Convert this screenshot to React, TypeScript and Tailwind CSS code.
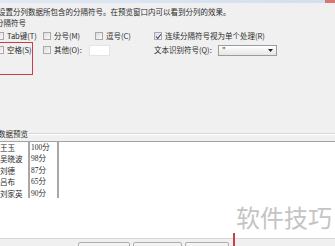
import React from "react"

const cjk = { fontFamily: '"Noto Sans CJK SC", "Noto Sans", sans-serif' }

function Box({ checked = false }: { checked?: boolean }) {
  return (
    <span className="relative flex h-[8px] w-[8px] shrink-0 items-center justify-center border border-[#a9a9a9] bg-gradient-to-br from-[#dcdcdc] to-[#fbfbfb]">
      {checked && (
        <svg width="7" height="7" viewBox="0 0 8 8" className="absolute">
          <path d="M1.2 4.2 L3.2 6.2 L6.8 1.4" fill="none" stroke="#3b4f7a" strokeWidth="1.3" />
        </svg>
      )}
    </span>
  )
}

function Check({ label, checked }: { label: string; checked?: boolean }) {
  return (
    <span className="flex items-center gap-[3px]">
      <Box checked={checked} />
      <span>{label}</span>
    </span>
  )
}

const names = ["王玉", "吴晓波", "刘德", "吕布", "刘家英"]
const scores = ["100分", "98分", "87分", "65分", "90分"]

export default function App() {
  return (
    <div
      className="relative h-[246px] w-[335px] overflow-hidden bg-[#f0f0f0] text-[7.5px] text-[#2b2b2b]"
      style={cjk}
    >
      {/* window title edge */}
      <div className="flex h-[3px]">
        <div className="flex-1 bg-gradient-to-r from-[#dfe8f4] to-[#d3dfef]" />
        <div className="w-[10px] bg-[#d9776e]" />
      </div>

      <div className="ml-[-4px]">
        <p className="mt-[4px] leading-[10px] ml-[2px]">
          设置分列数据所包含的分隔符号。在预览窗口内可以看到分列的效果。
        </p>
        <p className="mt-[1px] leading-[10px]">分隔符号</p>

        <div className="mt-[2px] flex h-[12px] items-center">
          <div className="w-[47px]">
            <Check label="Tab键(T)" />
          </div>
          <div className="w-[52px]">
            <Check label="分号(M)" />
          </div>
          <div className="w-[59px]">
            <Check label="逗号(C)" />
          </div>
          <Check label="连续分隔符号视为单个处理(R)" checked />
        </div>

        <div className="mt-[2px] flex h-[12px] items-center">
          <div className="w-[47px]">
            <Check label="空格(S)" />
          </div>
          <div className="flex w-[111px] items-center">
            <Check label="其他(O):" />
            <span className="ml-[7px] h-[11px] w-[21px] border border-[#e4e4e4] bg-white" />
          </div>
          <span className="w-[64px]">文本识别符号(Q):</span>
          <span className="flex h-[11px] w-[59px] items-center justify-between border border-[#9c9c9c] bg-gradient-to-b from-white to-[#e6e6e6] px-[3px] leading-none">
            <span>"</span>
            <svg width="5" height="3" viewBox="0 0 5 3">
              <path d="M0 0 H5 L2.5 3 Z" fill="#222" />
            </svg>
          </span>
        </div>

        {/* group: 数据预览 */}
        <div className="mt-[73px] flex items-center">
          <span className="pl-[2px] pr-[1px] leading-[10px]">数据预览</span>
          <div className="flex-1 border-t border-[#d6d6d6] border-b-white border-b" />
        </div>
      </div>

      <div className="mt-[2px] h-[97px] border-t border-[#a3a3a3] bg-white">
        <div className="flex h-[56px]">
          <div className="w-[30px] border-r-2 border-[#a8a8a8] leading-[11.4px]">
            {names.map((n) => (
              <div key={n}>{n}</div>
            ))}
          </div>
          <div
            className="w-[29px] border-r-2 border-[#a8a8a8] pl-[1px] leading-[11.4px]"
            style={{ fontFamily: '"Liberation Serif", "Noto Sans CJK SC", serif' }}
          >
            {scores.map((s) => (
              <div key={s}>{s}</div>
            ))}
          </div>
        </div>
      </div>

      <div className="border-t border-[#d8d8d8]">
        <div className="ml-[78px] mt-[3px] flex gap-[3px]">
          <span className="h-[14px] w-[52px] rounded-[2px] border border-[#acacac] bg-gradient-to-b from-[#f6f6f6] to-[#e3e3e3] pt-[3px] text-center">
            取消
          </span>
          <span className="h-[14px] w-[49px] rounded-[2px] border border-[#acacac] bg-gradient-to-b from-[#f6f6f6] to-[#e3e3e3] pt-[3px] text-center">
            上一步(B)
          </span>
          <span className="h-[14px] w-[44px] rounded-[2px] border border-[#acacac] bg-gradient-to-b from-[#f6f6f6] to-[#e3e3e3] pt-[3px] text-center">
            下一步(N)
          </span>
        </div>
      </div>

      {/* red annotation marks */}
      <div className="absolute left-[-2px] top-[42px] h-[33px] w-[35px] border-[1.5px] border-[#cc3d4a]" />
      <div className="absolute left-[233px] top-[233px] h-[14px] w-[1.5px] bg-[#cc3d4a]" />

      {/* watermark */}
      <div className="absolute left-[236px] top-[205px] text-[24px] leading-none text-[#c4c4c4]">
        软件技巧
      </div>
    </div>
  )
}
